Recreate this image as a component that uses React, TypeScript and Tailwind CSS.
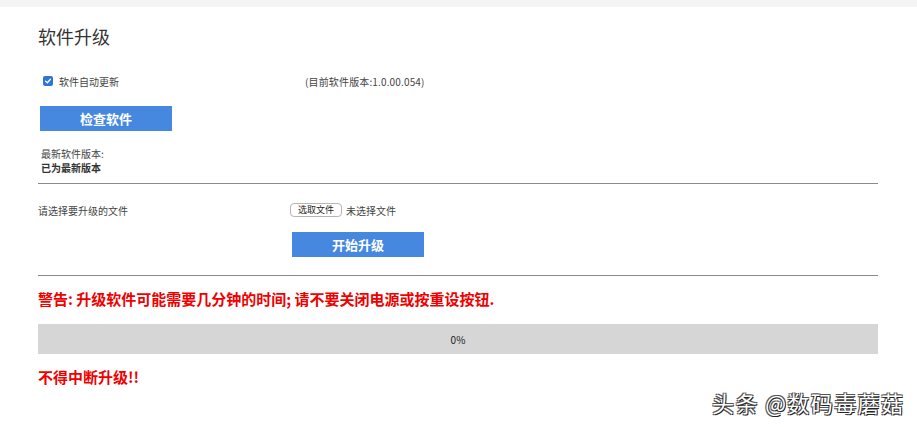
import React from 'react';

const cjk = { fontFamily: '"Noto Sans CJK SC", "Noto Sans", sans-serif' };

export default function App() {
  return (
    <div className="relative w-[917px] h-[427px] bg-white overflow-hidden text-[#333]" style={cjk}>
      <div className="h-[7px] bg-[#f4f4f4]" />
      <div className="pl-[38px] pr-[39px]">
        <h1 className="text-[18px] leading-[24px] mt-[17px] text-[#333]">软件升级</h1>

        <div className="flex items-center mt-[25px] h-[16px]">
          <div className="ml-[5px] w-[10px] h-[10px] rounded-[2px] bg-[#2f74d6] flex items-center justify-center">
            <svg viewBox="0 0 10 10" className="w-[8px] h-[8px]">
              <path d="M2 5.2 L4.2 7.2 L8 2.8" fill="none" stroke="white" strokeWidth="1.6" strokeLinecap="round" strokeLinejoin="round" />
            </svg>
          </div>
          <span className="ml-[6px] text-[10px] text-[#444]">软件自动更新</span>
          <span className="ml-[186px] text-[10px] text-[#444] tracking-[0.15px]">(目前软件版本:1.0.00.054)</span>
        </div>

        <button className="mt-[17px] ml-[2px] w-[132px] h-[25px] bg-[#4688e0] text-white text-[13px] font-bold flex items-center justify-center">
          检查软件
        </button>

        <div className="mt-[16px] ml-[3px] text-[10px] leading-[14px] text-[#444]">
          <div>最新软件版本:</div>
          <div className="font-bold text-[#333]">已为最新版本</div>
        </div>

        <div className="mt-[8px] border-t border-[#8a8a8a]" />

        <div className="flex items-center mt-[18px] h-[16px]">
          <span className="w-[252px] text-[10px] text-[#444]">请选择要升级的文件</span>
          <span className="h-[14px] px-[7px] border border-[#b5b5b5] rounded-[4px] bg-white text-[9px] leading-[12px] text-[#222] flex items-center">选取文件</span>
          <span className="ml-[4px] text-[10px] text-[#444]">未选择文件</span>
        </div>

        <button className="mt-[14px] ml-[254px] w-[132px] h-[25px] bg-[#4688e0] text-white text-[13px] font-bold flex items-center justify-center">
          开始升级
        </button>

        <div className="mt-[18px] border-t border-[#8a8a8a]" />

        <div className="mt-[14px] text-[15px] leading-[18px] font-bold text-[#f00000]">
          警告: 升级软件可能需要几分钟的时间; 请不要关闭电源或按重设按钮.
        </div>

        <div className="mt-[16px] h-[30px] bg-[#d6d6d6] flex items-center justify-center text-[10px] text-[#222]">
          0%
        </div>

        <div className="mt-[14px] text-[15px] leading-[18px] font-bold text-[#f00000]">不得中断升级!!</div>
      </div>

      <div
        className="absolute left-[712px] top-[387px] text-[22px] leading-[30px] tracking-[1.4px] text-white"
        style={{ textShadow: '1px 1px 0 #222, -1px -1px 0 #555, 1px -1px 0 #555, -1px 1px 0 #555' }}
      >
        头条 @数码毒蘑菇
      </div>
    </div>
  );
}
